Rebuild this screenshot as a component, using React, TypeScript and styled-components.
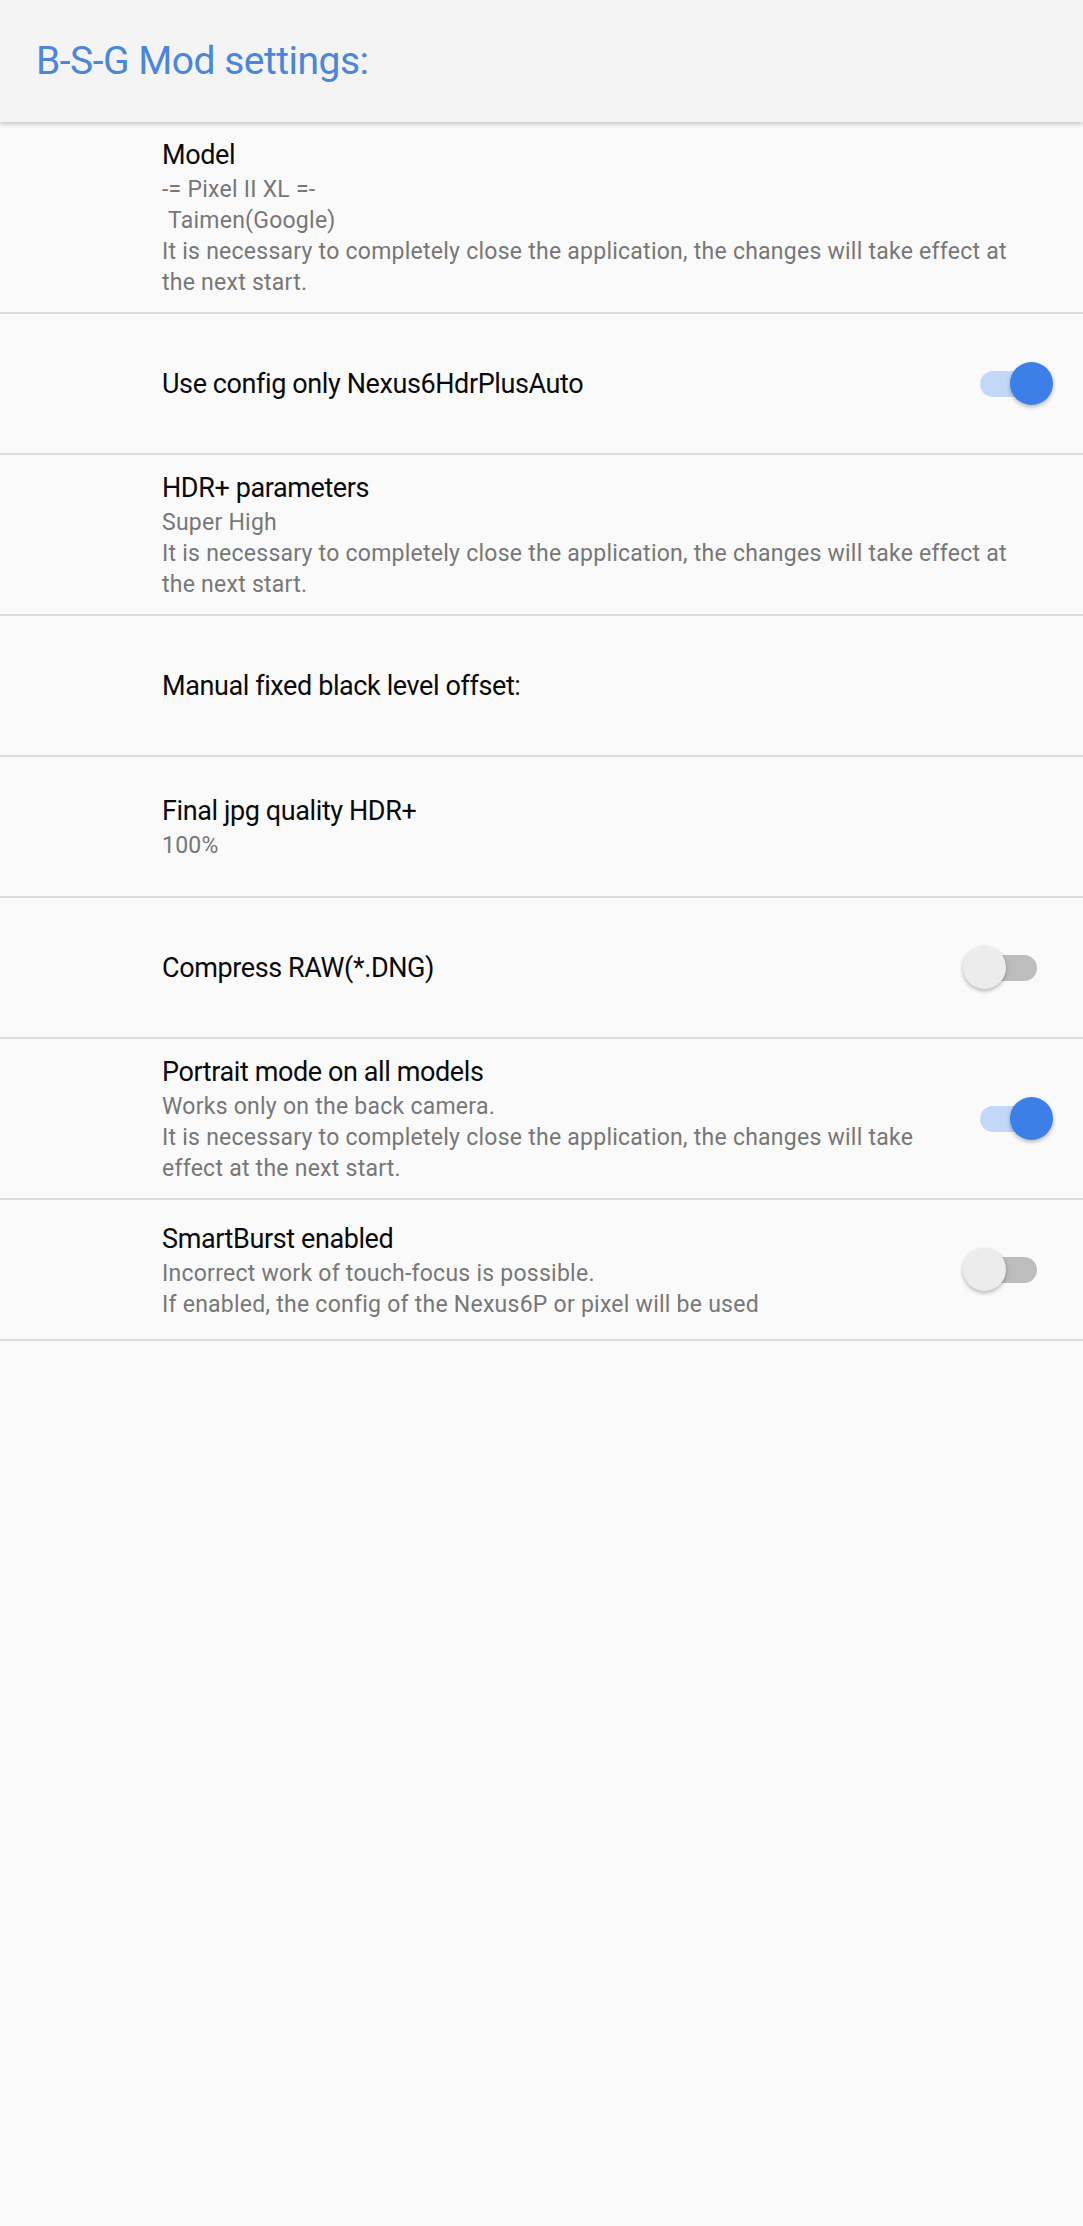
import styled, { createGlobalStyle } from "styled-components";

interface Preference {
  title: string;
  summary?: string;
  toggle?: boolean;
}

const RESTART_NOTE =
  "It is necessary to completely close the application, the changes will take effect at the next start.";

const preferences: Preference[] = [
  { title: "Model", summary: `-= Pixel II XL =-\n Taimen(Google)\n${RESTART_NOTE}` },
  { title: "Use config only Nexus6HdrPlusAuto", toggle: true },
  { title: "HDR+ parameters", summary: `Super High\n${RESTART_NOTE}` },
  { title: "Manual fixed black level offset:" },
  { title: "Final jpg quality HDR+", summary: "100%" },
  { title: "Compress RAW(*.DNG)", toggle: false },
  {
    title: "Portrait mode on all models",
    summary: `Works only on the back camera.\n${RESTART_NOTE}`,
    toggle: true,
  },
  {
    title: "SmartBurst enabled",
    summary:
      "Incorrect work of touch-focus is possible.\nIf enabled, the config of the Nexus6P or pixel will be used",
    toggle: false,
  },
];

export default function App() {
  return (
    <>
      <GlobalStyle />
      <Screen>
        <Toolbar>
          <ToolbarTitle>B-S-G Mod settings:</ToolbarTitle>
        </Toolbar>
        <List>
          {preferences.map((pref) => (
            <Row key={pref.title}>
              <TextBlock>
                <Title>{pref.title}</Title>
                {pref.summary && <Summary>{pref.summary}</Summary>}
              </TextBlock>
              {pref.toggle !== undefined && (
                <Switch>
                  <Track $on={pref.toggle} />
                  <Thumb $on={pref.toggle} />
                </Switch>
              )}
            </Row>
          ))}
        </List>
      </Screen>
    </>
  );
}

const GlobalStyle = createGlobalStyle`
  html, body {
    margin: 0;
    padding: 0;
    background: #fafafa;
  }
  body {
    font-family: Roboto, "Noto Sans", sans-serif;
  }
`;

const Screen = styled.div`
  width: 1083px;
  min-height: 2226px;
  background: #fafafa;
`;

const Toolbar = styled.header`
  position: relative;
  z-index: 1;
  height: 122px;
  display: flex;
  align-items: center;
  padding-left: 36px;
  box-sizing: border-box;
  background: #f4f4f4;
  box-shadow: 0 2px 5px rgba(0, 0, 0, 0.22);
`;

const ToolbarTitle = styled.h1`
  margin: 0;
  font-size: 39px;
  font-weight: 400;
  letter-spacing: -0.5px;
  color: #4a86dc;
`;

const List = styled.div`
  display: flex;
  flex-direction: column;
`;

const Row = styled.div`
  display: flex;
  align-items: center;
  min-height: 141px;
  box-sizing: border-box;
  padding: 14px 30px 14px 162px;
  border-bottom: 2px solid #dddddd;
`;

const TextBlock = styled.div`
  flex: 1;
  min-width: 0;
  padding-right: 16px;
`;

const Title = styled.div`
  font-size: 27px;
  line-height: 38px;
  letter-spacing: -0.4px;
  color: #0a0a0a;
`;

const Summary = styled.div`
  font-size: 23px;
  line-height: 31px;
  letter-spacing: 0.25px;
  color: #777777;
  white-space: pre-wrap;
`;

const Switch = styled.div`
  position: relative;
  flex: none;
  width: 90px;
  height: 44px;
`;

const Track = styled.div<{ $on: boolean }>`
  position: absolute;
  left: 17px;
  top: 9px;
  width: 57px;
  height: 26px;
  border-radius: 13px;
  background: ${(p) => (p.$on ? "#c3d7f8" : "#bdbdbd")};
`;

const Thumb = styled.div<{ $on: boolean }>`
  position: absolute;
  top: 0;
  left: ${(p) => (p.$on ? "47px" : "0")};
  width: 43px;
  height: 43px;
  border-radius: 50%;
  background: ${(p) => (p.$on ? "#3c7fe8" : "#ececec")};
  box-shadow: 0 2px 4px rgba(0, 0, 0, 0.28);
`;
